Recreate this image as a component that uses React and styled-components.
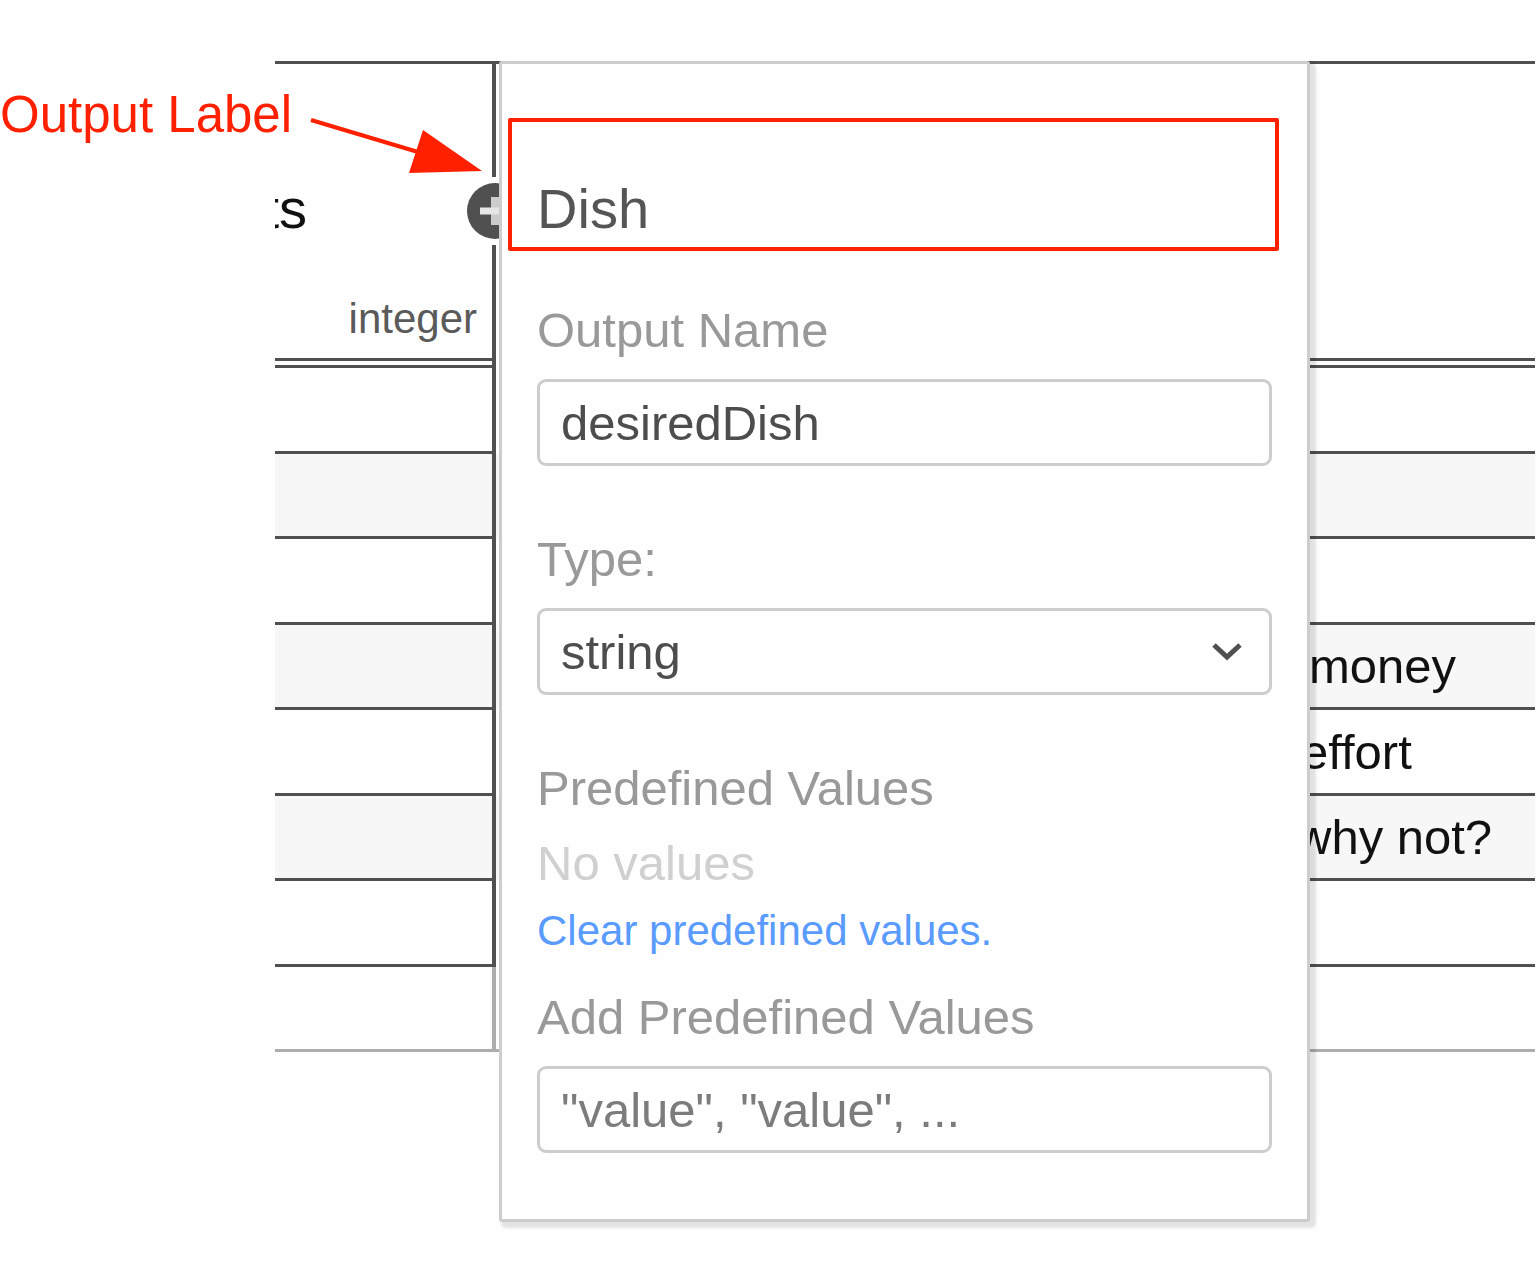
import React from "react";
import styled, { createGlobalStyle } from "styled-components";

const ink = "#505050";
const faint = "#adadad";
const edge = "#cdcdcd";
const red = "#ff2000";

const GlobalStyle = createGlobalStyle`
  *, *::before, *::after { box-sizing: border-box; }
  body {
    margin: 0;
    background: #fefefe;
    color: #111;
    font-family: "Liberation Sans", Arial, sans-serif;
  }
`;

const Page = styled.main`
  position: relative;
  min-height: 100vh;
  padding: 61px 2px 44px 275px;
  overflow: hidden;
`;

const DecisionTable = styled.table`
  width: 100%;
  table-layout: fixed;
  border-collapse: separate;
  border-spacing: 0;
  font-size: 49px;
  line-height: 56px;
`;

const InputCol = styled.col`
  width: 217px;
`;

const OutputCol = styled.col`
  width: 804px;
`;

const HeadCell = styled.th`
  position: relative;
  height: 307px;
  padding: 0;
  border-top: 3px solid ${ink};
  border-bottom: 10px double ${ink};
  font-weight: 400;
  vertical-align: top;
`;

const OutputHeadCell = styled.th`
  padding: 0;
  border-top: 3px solid ${ink};
  border-left: 4px solid ${ink};
`;

const HeadContent = styled.div`
  display: flex;
  flex-direction: column;
  justify-content: space-between;
  height: 294px;
  padding: 113px 15px 15px 0;
`;

const ClippedTitle = styled.span`
  display: flex;
  justify-content: flex-end;
  width: 32px;
  overflow: hidden;
  font-size: 56px;
  line-height: 64px;
`;

const TypeName = styled.span`
  color: #5a5a5a;
  font-size: 42px;
  line-height: 48px;
  text-align: right;
`;

const AddInput = styled.button`
  position: absolute;
  z-index: 1;
  top: 113px;
  right: -37px;
  width: 68px;
  height: 68px;
  padding: 6px;
  border: 0;
  background: #fefefe;

  svg { display: block; }
`;

const Row = styled.tr`
  height: 86px;
  background: ${(p) => (p.$shaded ? "#f7f7f7" : "transparent")};

  &:nth-child(even) { height: 85px; }
`;

const Cell = styled.td`
  padding: 0 0 0 ${(p) => p.$start || 0}px;
  border-bottom: 3px solid ${(p) => (p.$pending ? faint : ink)};
  white-space: nowrap;
`;

const OutputCell = styled.td`
  padding: 0;
  border-left: 4px solid ${(p) => (p.$pending ? faint : ink)};
  border-bottom: ${(p) => (p.$pending ? `3px solid ${faint}` : "0")};
`;

const Popover = styled.form`
  position: absolute;
  z-index: 2;
  top: 61px;
  left: 499px;
  right: 227px;
  display: flex;
  flex-direction: column;
  padding: 113px 35px 66px;
  border: 3px solid ${edge};
  border-radius: 3px;
  background: #fefefe;
  box-shadow: 4px 4px 3px 2px rgba(0, 0, 0, 0.11);
`;

const OutputTitle = styled.h2`
  margin: 0 0 61px;
  color: #555;
  font-size: 56px;
  font-weight: 400;
  line-height: 64px;
`;

const Field = styled.div`
  display: flex;
  flex-direction: column;
  gap: 21px;
  margin-bottom: ${(p) => (p.$last ? 0 : 65)}px;
`;

const Label = styled.label`
  color: #999;
  font-size: 49px;
  line-height: 56px;
`;

const GroupTitle = styled.h3`
  margin: 0;
  color: #999;
  font-size: 49px;
  font-weight: 400;
  line-height: 56px;
`;

const TextInput = styled.input`
  width: 100%;
  height: 87px;
  padding: 0 21px;
  border: 3px solid ${edge};
  border-radius: 9px;
  background: #fefefe;
  color: #4d4d4d;
  font: 49px/56px "Liberation Sans", Arial, sans-serif;
  outline: 0;

  &::placeholder {
    color: #7c7c7c;
    opacity: 1;
  }
`;

const SelectBox = styled.div`
  position: relative;

  svg {
    position: absolute;
    top: 34px;
    right: 29px;
    pointer-events: none;
  }
`;

const Select = styled(TextInput).attrs({ as: "select" })`
  display: block;
  appearance: none;
`;

const Empty = styled.p`
  margin: 19px 0 16px;
  color: #d0d0d0;
  font-size: 49px;
  line-height: 56px;
`;

const ClearLink = styled.a`
  align-self: flex-start;
  margin-bottom: 34px;
  color: #5a9bff;
  font-size: 42px;
  line-height: 48px;
  text-decoration: none;
`;

const Highlight = styled.div`
  position: absolute;
  top: 54px;
  left: 6px;
  right: 28px;
  height: 133px;
  border: 4px solid ${red};
  border-radius: 2px;
  pointer-events: none;
`;

const Callout = styled.div`
  position: absolute;
  top: 86px;
  left: 0;
  color: ${red};
  font-size: 51px;
  line-height: 58px;
  white-space: nowrap;
`;

const Arrow = styled.svg`
  position: absolute;
  top: 100px;
  left: 300px;
`;

const rows = [
  {},
  { shaded: true },
  {},
  { shaded: true, note: "money", start: 13 },
  { note: "effort", start: 5 },
  { shaded: true, note: "why not?", start: 0 },
  {},
  { pending: true },
];

export default function App() {
  return (
    <>
      <GlobalStyle />
      <Page>
        <DecisionTable>
          <colgroup>
            <InputCol />
            <OutputCol />
            <col />
          </colgroup>
          <thead>
            <tr>
              <HeadCell>
                <HeadContent>
                  <ClippedTitle>ts</ClippedTitle>
                  <TypeName>integer</TypeName>
                </HeadContent>
                <AddInput type="button" aria-label="Add">
                  <svg width="56" height="56" viewBox="0 0 56 56">
                    <circle cx="28" cy="28" r="28" fill={ink} />
                    <path d="M28 14v28" stroke="#ccc" strokeWidth="8" />
                    <path d="M13 28h30" stroke="#e6e6e6" strokeWidth="7" />
                  </svg>
                </AddInput>
              </HeadCell>
              <OutputHeadCell />
              <HeadCell />
            </tr>
          </thead>
          <tbody>
            {rows.map((row, i) => (
              <Row key={i} $shaded={row.shaded}>
                <Cell $pending={row.pending} />
                <OutputCell $pending={row.pending} />
                <Cell $pending={row.pending} $start={row.start}>
                  {row.note}
                </Cell>
              </Row>
            ))}
          </tbody>
        </DecisionTable>

        <Popover>
          <OutputTitle>Dish</OutputTitle>
          <Field>
            <Label htmlFor="output-name">Output Name</Label>
            <TextInput id="output-name" defaultValue="desiredDish" spellCheck={false} />
          </Field>
          <Field>
            <Label htmlFor="output-type">Type:</Label>
            <SelectBox>
              <Select id="output-type" defaultValue="string">
                <option>string</option>
              </Select>
              <svg width="32" height="22" viewBox="0 0 32 22">
                <path d="M3 3l13 12L29 3" fill="none" stroke={ink} strokeWidth="5" />
              </svg>
            </SelectBox>
          </Field>
          <GroupTitle>Predefined Values</GroupTitle>
          <Empty>No values</Empty>
          <ClearLink href="#clear">Clear predefined values.</ClearLink>
          <Field $last>
            <Label htmlFor="add-values">Add Predefined Values</Label>
            <TextInput id="add-values" placeholder={'"value", "value", ...'} />
          </Field>
          <Highlight />
        </Popover>

        <Callout>Output Label</Callout>
        <Arrow width="190" height="80" viewBox="300 100 190 80">
          <path d="M311 120L418 152" stroke={red} strokeWidth="4" />
          <path d="M482 171L409 173L423 130Z" fill={red} />
        </Arrow>
      </Page>
    </>
  );
}
